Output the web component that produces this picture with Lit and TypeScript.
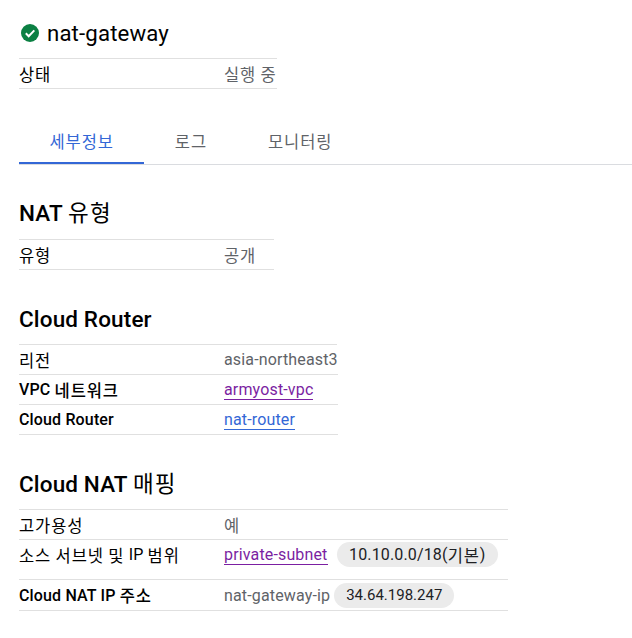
import { LitElement, html, css } from "lit";
import { customElement } from "lit/decorators.js";

@customElement("app-root")
export class AppRoot extends LitElement {
  static styles = css`
    :host { display: block; width: 632px; height: 638px; overflow: hidden; background: #fff; color: #000;
      font-family: Roboto, "Noto Sans CJK KR", sans-serif; font-size: 16px; letter-spacing: 0.15px; }
    .ko { letter-spacing: 0.9px; font-size: 16.5px; word-spacing: -0.6px; }
    .page { padding: 18px 0 0 19px; display: flex; flex-direction: column; }
    .title { display: flex; align-items: center; gap: 8px; height: 30px; margin-bottom: 10px; font-size: 22.2px; line-height: 30px; padding-left: 2px; }
    .title svg { width: 18px; height: 18px; flex: none; }
    .tbl { display: grid; border-top: 1px solid #e0e0e0; }
    .row { display: grid; grid-template-columns: 205px 1fr; border-bottom: 1px solid #e0e0e0; align-items: center; height: 29px; }
    .row.tall { height: 39px; align-items: start; }
    .row.ip { height: 30px; }
    .k { display: flex; align-items: center; height: 29px; white-space: pre; }
    .k.b { font-weight: 500; }
    .v { color: #5f6368; display: flex; align-items: center; white-space: pre; height: 29px; }
    .status { width: 258px; }
    .type { width: 255px; }
    .router { width: 318px; }
    .map { width: 489px; }
    a { text-decoration: none; border-bottom: 1px solid currentColor; line-height: 18px; padding-top: 2px; }
    a.visited { color: #7b1fa2; }
    a.link { color: #3367d6; }
    .chip { display: inline-flex; align-items: center; height: 25px; border-radius: 13px; background: #ebebeb; color: #202124; padding: 0 12.5px; }
    .chip.a { margin-left: 9px; }
    .chip.b { margin-left: 4px; padding: 0 12px; font-size: 15px; letter-spacing: 0; }
    .tabs { display: flex; margin: 34px 0 0 0; border-bottom: 1px solid #dadce0; height: 41px; }
    .tab { color: #5f6368; padding: 0 30.5px; display: flex; align-items: center; height: 41px; box-sizing: border-box; padding-bottom: 5px; }
    .tab.on { color: #3367d6; border-bottom: 2px solid #3367d6; padding-bottom: 3px; }
    h2 { font-size: 22.5px; font-weight: 500; margin: 0; height: 25px; line-height: 25px; white-space: pre; }
    h2 .ko { font-size: 22.5px; font-weight: 400; letter-spacing: 1.2px; }
    .s1 { margin-top: 36px; margin-bottom: 13px; }
    .s2 { margin-top: 37px; margin-bottom: 12px; }
    .s3 { margin-top: 37px; margin-bottom: 12px; }
  `;

  render() {
    return html`<div class="page">
      <div class="title">
        <svg viewBox="0 0 18 18" aria-hidden="true"><circle cx="9" cy="9" r="9" fill="#0b8043"/><path d="M4.8 9.3l2.9 2.9 5.6-5.8" fill="none" stroke="#fff" stroke-width="2"/></svg>
        <span>nat-gateway</span>
      </div>
      <div class="tbl status">
        <div class="row"><div class="k"><span class="ko">상태</span></div><div class="v"><span class="ko">실행 중</span></div></div>
      </div>
      <div class="tabs">
        <div class="tab on"><span class="ko">세부정보</span></div><div class="tab"><span class="ko">로그</span></div><div class="tab"><span class="ko">모니터링</span></div>
      </div>
      <h2 class="s1">NAT <span class="ko">유형</span></h2>
      <div class="tbl type">
        <div class="row"><div class="k"><span class="ko">유형</span></div><div class="v"><span class="ko">공개</span></div></div>
      </div>
      <h2 class="s2">Cloud Router</h2>
      <div class="tbl router">
        <div class="row"><div class="k"><span class="ko">리전</span></div><div class="v">asia-northeast3</div></div>
        <div class="row"><div class="k b">VPC <span class="ko">네트워크</span></div><div class="v"><a class="visited">armyost-vpc</a></div></div>
        <div class="row"><div class="k b">Cloud Router</div><div class="v"><a class="link">nat-router</a></div></div>
      </div>
      <h2 class="s3">Cloud NAT <span class="ko">매핑</span></h2>
      <div class="tbl map">
        <div class="row"><div class="k"><span class="ko">고가용성</span></div><div class="v"><span class="ko">예</span></div></div>
        <div class="row tall"><div class="k"><span class="ko">소스 서브넷 및 </span>IP <span class="ko">범위</span></div><div class="v"><a class="visited">private-subnet</a><span class="chip a">10.10.0.0/18(<span class="ko">기본</span>)</span></div></div>
        <div class="row ip"><div class="k b">Cloud NAT IP <span class="ko">주소</span></div><div class="v">nat-gateway-ip<span class="chip b">34.64.198.247</span></div></div>
      </div>
    </div>`;
  }
}
